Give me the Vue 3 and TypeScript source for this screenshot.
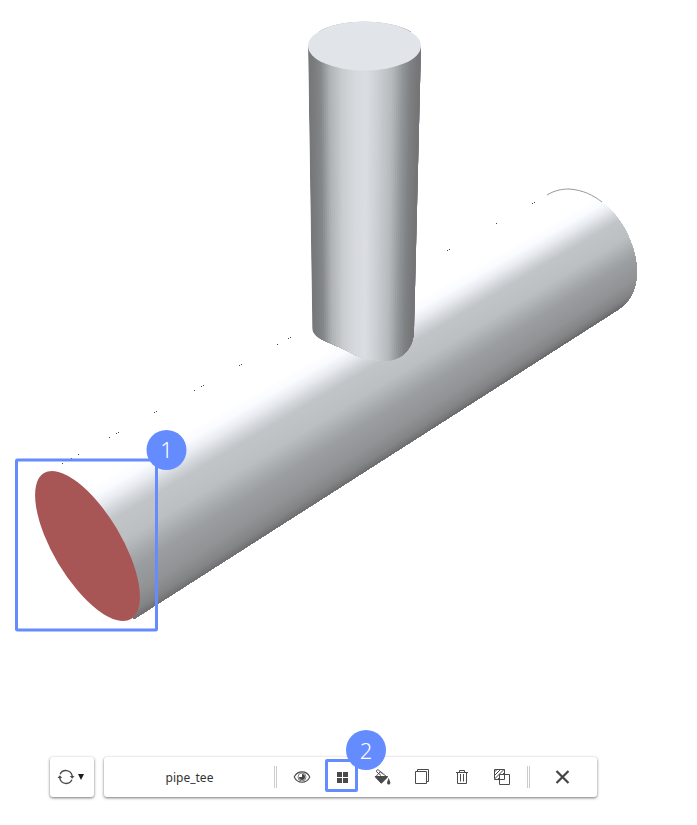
<script setup lang="ts">
import { ref } from 'vue'

type Point = [number, number]
type Stop = [number, number, number, number]
interface Strip { points: string; fill: string }

const mainStops: Stop[] = [
  [0, 255, 255, 255], [0.19, 255, 255, 255], [0.25, 249, 251, 255], [0.31, 232, 235, 240],
  [0.37, 209, 212, 216], [0.42, 193, 197, 200], [0.56, 187, 191, 193], [0.66, 167, 170, 172],
  [0.72, 156, 159, 161], [0.86, 145, 147, 149], [0.94, 132, 133, 135], [0.98, 116, 116, 118], [1, 90, 90, 92],
]
const branchStops: Stop[] = [
  [0, 116, 120, 122], [0.06, 124, 125, 126], [0.11, 133, 136, 138], [0.19, 174, 178, 180],
  [0.3, 200, 204, 207], [0.42, 214, 218, 223], [0.52, 218, 221, 226], [0.62, 204, 208, 212],
  [0.75, 181, 185, 188], [0.85, 143, 147, 149], [0.91, 126, 129, 131], [1, 116, 115, 117],
]

function colorAt(stops: Stop[], t: number): string {
  const next = Math.max(1, stops.findIndex((s) => s[0] >= t))
  const a = stops[next - 1]
  const b = stops[next]
  const k = (t - a[0]) / (b[0] - a[0])
  const mix = [1, 2, 3].map((i) => Math.round(a[i] + (b[i] - a[i]) * k))
  return `rgb(${mix.join(',')})`
}

function lerp(a: Point, b: Point, t: number): Point {
  return [a[0] + (b[0] - a[0]) * t, a[1] + (b[1] - a[1]) * t]
}

// Each strip reaches the far edge, so the next one paints over it without a seam.
function shade(stops: Stop[], count: number, a0: Point, a1: Point, b0: Point, b1: Point): Strip[] {
  return Array.from({ length: count }, (_, i) => ({
    points: [lerp(a0, b0, i / count), lerp(a1, b1, i / count), b1, b0].map((p) => p.join(',')).join(' '),
    fill: colorAt(stops, (i + 0.5) / count),
  }))
}

const mainStrips = shade(mainStops, 110, [0, 497], [697, 113], [0, 708], [697, 260])
const branchStrips = shade(branchStops, 52, [308, 46], [313, 370], [421, 46], [413, 370])

const edgeDots: Point[] = [
  [62, 463], [71, 458], [78, 454], [109, 437], [116, 433], [118, 432], [154, 412], [156, 411],
  [194, 390], [201, 386], [203, 385], [239, 365], [241, 364], [277, 344], [288, 338], [290, 337],
  [447, 250], [449, 249], [496, 223], [532, 203], [534, 202],
]

const partName = ref('pipe_tee')
</script>

<template>
  <main class="viewer">
    <svg class="scene" viewBox="0 0 697 757" role="img" aria-label="pipe_tee">
      <defs>
        <clipPath id="main-pipe">
          <path d="M52 470 L548 195 C555 190 563 189 569 189 C584 190 596 196 605 204 C625 221 637 250 637 273 C636 289 631 301 619 309 L134 619 L88 546 Z" />
        </clipPath>
        <clipPath id="branch-pipe">
          <path d="M308 46 L312 328 C313 338 326 341 341 348 C355 356 370 361 386 361 C402 360 412 350 414 333 L421 46 Z" />
        </clipPath>
      </defs>
      <g clip-path="url(#main-pipe)">
        <polygon v-for="(strip, i) in mainStrips" :key="i" :points="strip.points" :fill="strip.fill" />
      </g>
      <path class="rim" d="M547 195 C555 190 563 189 569 189 C583 190 593 195 602 202" />
      <rect v-for="(dot, i) in edgeDots" :key="i" :x="dot[0]" :y="dot[1]" width="1" height="1" fill="#444" />
      <g clip-path="url(#branch-pipe)">
        <polygon v-for="(strip, i) in branchStrips" :key="i" :points="strip.points" :fill="strip.fill" />
      </g>
      <path class="rim" d="M319 32 C339 19 389 19 411 32" />
      <ellipse cx="364.5" cy="46" rx="56.5" ry="24.5" fill="#e1e5ea" />
      <ellipse cx="87.5" cy="546" rx="85" ry="34" transform="rotate(59.2 87.5 546)" fill="#a85555" />
      <rect class="pick" x="16.5" y="460" width="140" height="170" rx="1" />
      <circle cx="166.5" cy="450" r="20" fill="#648cff" />
      <text class="pick-number" x="166.5" y="458" text-anchor="middle">1</text>
    </svg>

    <div class="toolbar">
      <button class="panel cycle" type="button" aria-label="Cycle selection">
        <svg width="30" height="20" viewBox="0 0 30 20">
          <path d="M3.1 7.2 A6.4 6.4 0 0 1 15.2 9 M14.9 12.8 A6.4 6.4 0 0 1 2.8 11" fill="none" stroke="#4a4a4a" stroke-width="1.4" />
          <path d="M0.5 11 L2.8 8.2 L5.2 11 Z M12.8 9 L17.5 9 L15.2 11.8 Z" fill="#4a4a4a" />
          <path d="M21 7 H27 L24 13 Z" fill="#1d1d1d" />
        </svg>
      </button>

      <div class="panel actions">
        <span class="name">{{ partName }}</span>
        <span class="divider"></span>
        <button class="tool" type="button" aria-label="Visibility">
          <svg width="20" height="20" viewBox="0 0 20 20" fill="none" stroke="#4a4a4a">
            <path d="M2.2 10 C5.5 3.1 14.5 3.1 17.8 10 C14.5 16.9 5.5 16.9 2.2 10 Z" stroke-width="1.1" />
            <circle cx="10" cy="10" r="4" stroke-width="0.7" />
            <path d="M10 7 V10 H7 A3 3 0 1 0 10 7 Z" fill="#444" stroke="none" />
          </svg>
        </button>
        <button class="tool selected" type="button" aria-label="Components">
          <svg width="20" height="20" viewBox="0 0 20 20" fill="#4a4a4a">
            <path d="M5 5 H10 V10 H5 Z M11 5 H16 V10 H11 Z M5 11 H10 V16 H5 Z M11 11 H16 V16 H11 Z" />
          </svg>
          <span class="badge">2</span>
        </button>
        <button class="tool" type="button" aria-label="Appearance">
          <svg width="20" height="20" viewBox="0 0 20 20" fill="none" stroke="#4a4a4a">
            <path d="M8.5 4.5 L3.5 10 L9.3 16 L15.3 10.4 Z" />
            <path d="M3.2 9.5 H15.5 L9.3 16.2 Z" fill="#4a4a4a" />
            <path d="M9 8.5 L4.5 4.7 A1.5 1.5 0 0 1 6.3 2.8 L10.5 6.8" />
            <path d="M16.6 10.8 C17.4 13.6 18.5 14.8 18.3 16.2 C18 18 15.4 18 15.1 16.2 C14.9 14.8 16 13.6 16.6 10.8 Z" fill="#4a4a4a" stroke="none" />
          </svg>
        </button>
        <button class="tool" type="button" aria-label="Duplicate">
          <svg width="20" height="20" viewBox="0 0 20 20" fill="none" stroke="#4a4a4a">
            <path d="M3.5 4.5 H14.5 V16.5 H3.5 Z M5.5 4.5 V2.5 H16.5 V14.5 H14.5" />
          </svg>
        </button>
        <button class="tool" type="button" aria-label="Delete">
          <svg width="20" height="20" viewBox="0 0 20 20" fill="none" stroke="#4a4a4a">
            <path d="M4 5.5 H16 M7.5 5 V3.5 H12.5 V5 M5.5 5.5 V16.5 H14.5 V5.5 M8.5 7 V14.5 M11.5 7 V14.5" />
          </svg>
        </button>
        <button class="tool" type="button" aria-label="Boolean">
          <svg width="20" height="20" viewBox="0 0 20 20" fill="none" stroke="#4a4a4a">
            <path d="M2.5 2.5 H12.5 V12.5 H2.5 Z" />
            <path d="M7.5 7.5 H17.5 V17.5 H7.5 Z" />
            <path d="M2.5 5 L5 2.5 M2.5 8.5 L8.5 2.5 M2.5 12 L12 2.5 M5.5 12.5 L7.5 10.5 M10.5 7.5 L12.5 5.5" />
          </svg>
        </button>
        <span class="divider"></span>
        <button class="tool close" type="button" aria-label="Close">
          <svg width="20" height="20" viewBox="0 0 20 20" fill="none" stroke="#444" stroke-width="2.2">
            <path d="M4.5 4 L16.5 16 M16.5 4 L4.5 16" />
          </svg>
        </button>
      </div>
    </div>
  </main>
</template>

<style>
body {
  background: #fff;
}
</style>

<style scoped>
.viewer {
  font-family: "Noto Sans", "Open Sans", sans-serif;
  color: #333;
}

.scene {
  display: block;
  width: 100%;
  height: auto;
}

.rim {
  fill: none;
  stroke: #999;
  stroke-width: 1;
}

.pick {
  fill: none;
  stroke: #648cff;
  stroke-width: 3;
}

.pick-number {
  fill: #fff;
  font-size: 22px;
  font-weight: 300;
}

.toolbar {
  display: flex;
  gap: 10px;
  padding: 0 100px 28px 50px;
}

.panel {
  box-sizing: border-box;
  height: 40px;
  border: 0;
  border-radius: 3px;
  background: #fff;
  box-shadow: 0 1px 3px rgba(0, 0, 0, 0.55);
}

.cycle {
  display: flex;
  align-items: center;
  justify-content: center;
  flex: none;
  width: 44px;
  padding: 0;
}

.actions {
  display: flex;
  flex: 1;
  align-items: center;
}

.name {
  flex: 1;
  padding: 2px 0 0 6px;
  font-size: 12px;
  line-height: 16px;
  text-align: center;
}

.divider {
  box-sizing: border-box;
  width: 3px;
  height: 22px;
  margin: 0 5px;
  border: solid #ccc;
  border-width: 0 1px;
}

.tool {
  position: relative;
  display: flex;
  align-items: center;
  justify-content: center;
  width: 40px;
  height: 40px;
  padding: 0;
  border: 0;
  background: none;
}

.selected::before {
  content: "";
  position: absolute;
  inset: 2px 4px 5px 3px;
  border: 3px solid #648cff;
  border-radius: 2px;
}

.badge {
  position: absolute;
  top: -27px;
  left: 24px;
  z-index: 1;
  width: 40px;
  height: 40px;
  border-radius: 50%;
  background: #648cff;
  color: #fff;
  font-family: "Noto Sans", "Open Sans", sans-serif;
  font-size: 22px;
  font-weight: 300;
  line-height: 40px;
  text-align: center;
}

.close {
  width: 54px;
  margin-right: 8px;
}
</style>
